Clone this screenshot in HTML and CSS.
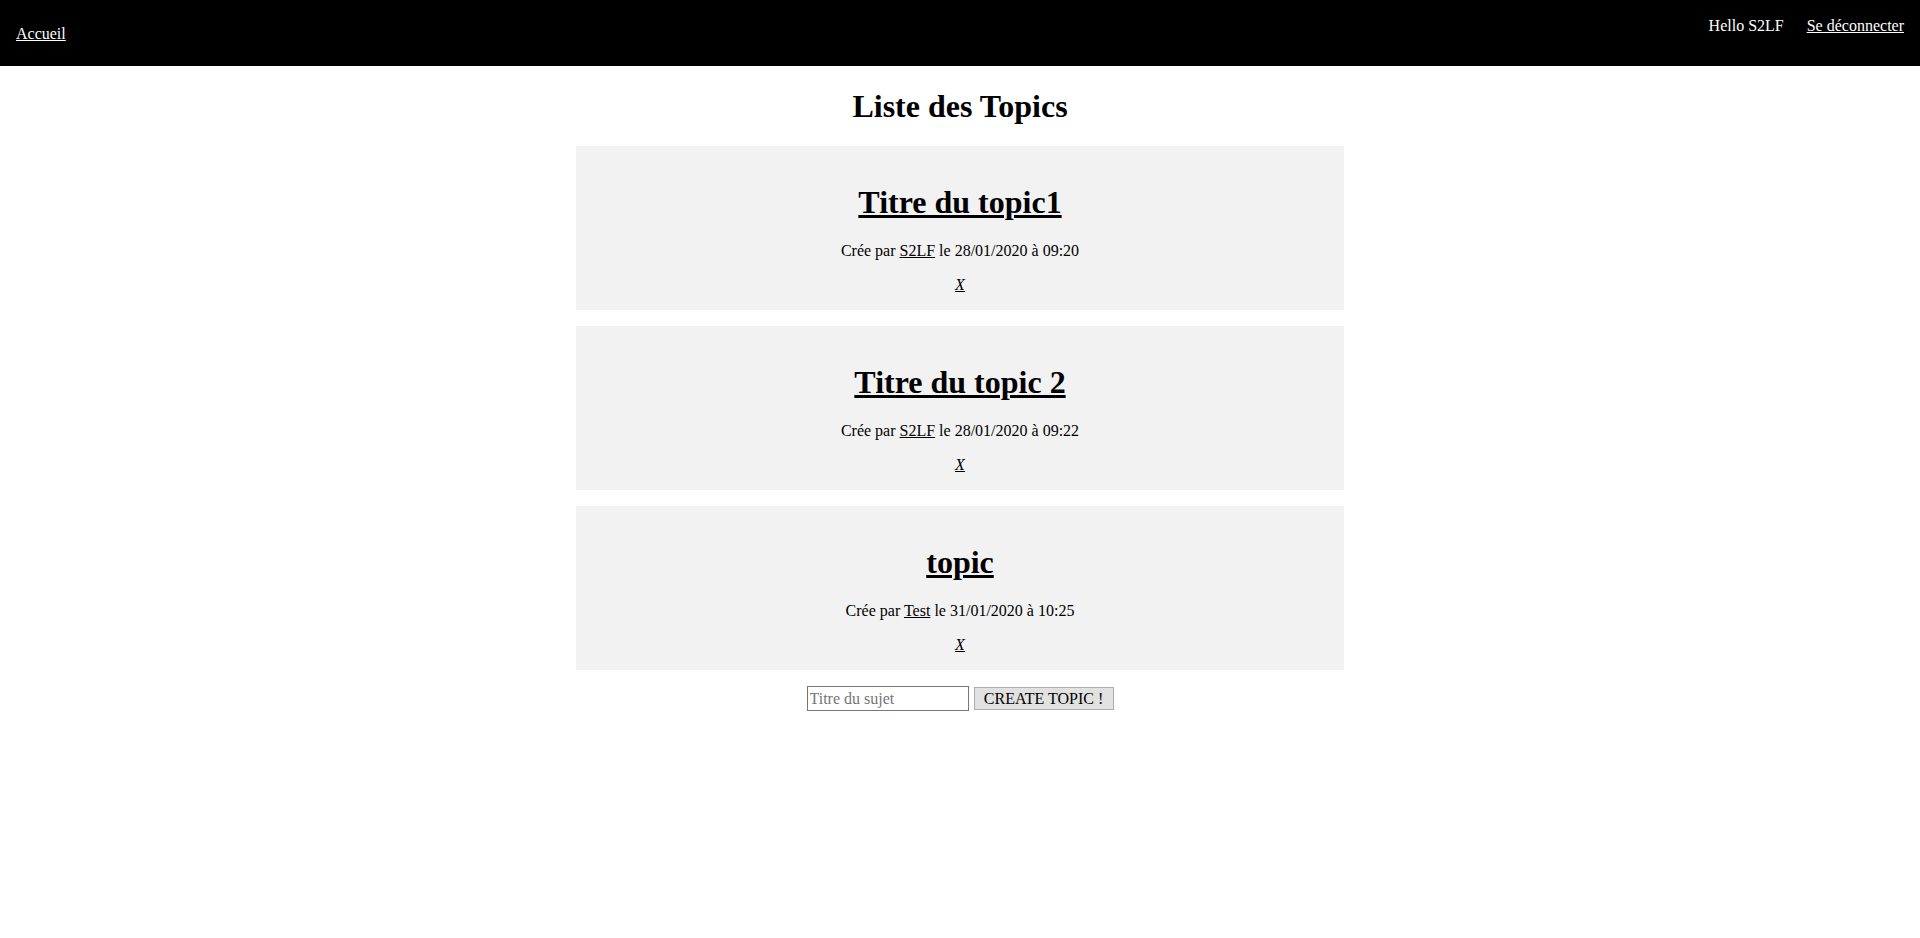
FILE: index.html
```html
<!DOCTYPE html>
<html lang="fr">
<head>
<meta charset="utf-8">
<title>Liste des Topics</title>
<link rel="stylesheet" href="styles.css">
</head>
<body>
<header class="topbar">
  <div class="topbar-left"><a class="nav-link" href="#">Accueil</a></div>
  <div class="topbar-right">
    <span class="hello">Hello S2LF</span>
    <a class="nav-link" href="#">Se déconnecter</a>
  </div>
</header>
<main class="content">
  <h1 class="page-title">Liste des Topics</h1>
  <div class="topic">
    <h1 class="topic-title"><a href="#">Titre du topic1</a></h1>
    <p class="topic-meta">Crée par <a href="#">S2LF</a> le 28/01/2020 à 09:20</p>
    <p class="topic-del"><a href="#">X</a></p>
  </div>
  <div class="topic">
    <h1 class="topic-title"><a href="#">Titre du topic 2</a></h1>
    <p class="topic-meta">Crée par <a href="#">S2LF</a> le 28/01/2020 à 09:22</p>
    <p class="topic-del"><a href="#">X</a></p>
  </div>
  <div class="topic">
    <h1 class="topic-title"><a href="#">topic</a></h1>
    <p class="topic-meta">Crée par <a href="#">Test</a> le 31/01/2020 à 10:25</p>
    <p class="topic-del"><a href="#">X</a></p>
  </div>
  <form class="new-topic">
    <input class="new-input" type="text" placeholder="Titre du sujet">
    <button class="new-btn" type="button">CREATE TOPIC !</button>
  </form>
</main>
</body>
</html>
```

FILE: styles.css
```css
html, body {
  margin: 0;
  padding: 0;
  background: #ffffff;
  font-family: "Liberation Serif", "Times New Roman", serif;
  font-size: 16px;
  color: #000;
}

.topbar {
  height: 66px;
  background: #000;
  color: #fff;
  display: flex;
  justify-content: space-between;
  align-items: flex-start;
  padding: 0 16px;
  box-sizing: border-box;
}

.topbar-left {
  padding-top: 25px;
}

.topbar-right {
  padding-top: 17px;
  display: flex;
  gap: 23px;
}

.nav-link {
  color: #fff;
  text-decoration: underline;
}

.hello {
  color: #fff;
}

.content {
  display: flex;
  flex-direction: column;
  align-items: center;
}

.page-title {
  font-size: 32px;
  font-weight: bold;
  margin: 22px 0 21px;
  text-align: center;
}

.topic {
  width: 768px;
  background: #f2f2f2;
  text-align: center;
  padding-top: 17px;
  margin-bottom: 16px;
  display: flow-root;
}

.topic-title {
  font-size: 32px;
  font-weight: bold;
  margin: 21px 0;
}

.topic-title a,
.topic-meta a,
.topic-del a {
  color: #000;
  text-decoration: underline;
}

.topic-meta {
  margin: 16px 0;
}

.topic-del {
  margin: 16px 0;
  font-style: italic;
}

.new-topic {
  display: flex;
  gap: 5px;
  align-items: center;
}

.new-input {
  width: 162px;
  height: 25px;
  box-sizing: border-box;
  border: 1px solid #767676;
  padding: 1px 2px;
  font-family: "Liberation Serif", "Times New Roman", serif;
  font-size: 16px;
  background: #fff;
}

.new-input::placeholder {
  color: #757575;
}

.new-btn {
  width: 140px;
  height: 23px;
  box-sizing: border-box;
  border: 1px solid #adadad;
  background: #e1e1e1;
  padding: 0 6px;
  font-family: "Liberation Serif", "Times New Roman", serif;
  font-size: 16px;
  color: #000;
}
```
